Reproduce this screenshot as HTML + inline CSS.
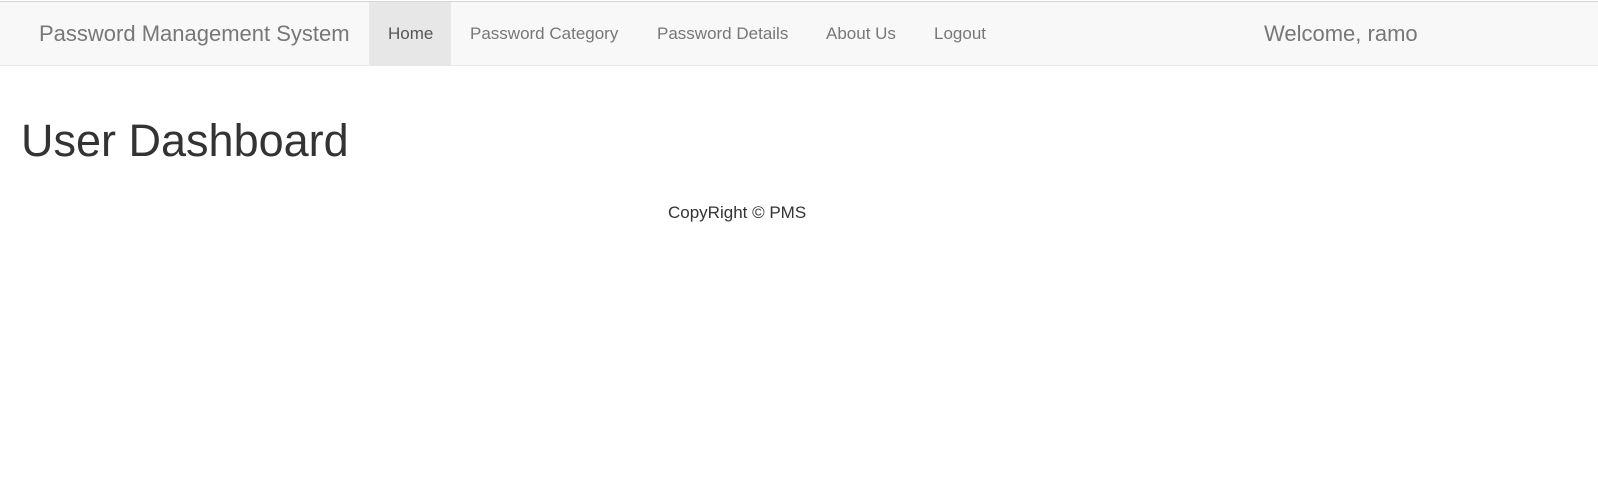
<!DOCTYPE html>
<html><head><style>
body{margin:0;background:#fff;font-family:"Liberation Sans",Arial,sans-serif;width:1598px;height:497px;overflow:hidden;position:relative}
.bar{position:absolute;left:0;top:0;width:1598px;height:1px;background:#fff;border-bottom:1px solid #d5d5d5}
.nav{position:absolute;left:0;top:2px;width:1598px;height:63px;background:#f8f8f8;border-bottom:1px solid #e7e7e7}
.t{position:absolute;white-space:nowrap;color:#777}
.act{position:absolute;left:369px;top:2px;width:82px;height:63px;background:#e7e7e7}
</style></head><body>
<div class="bar"></div>
<div class="nav"></div>
<div class="act"></div>
<div class="t" style="left:39px;top:21px;font-size:22px">Password Management System</div>
<div class="t" style="left:388px;top:24px;font-size:17px;color:#555">Home</div>
<div class="t" style="left:470px;top:24px;font-size:17px">Password Category</div>
<div class="t" style="left:657px;top:24px;font-size:17px">Password Details</div>
<div class="t" style="left:826px;top:24px;font-size:17px">About Us</div>
<div class="t" style="left:934px;top:24px;font-size:17px">Logout</div>
<div class="t" style="left:1264px;top:21px;font-size:22px">Welcome, ramo</div>
<div class="t" style="left:21px;top:115px;font-size:45px;color:#333">User Dashboard</div>
<div class="t" style="left:668px;top:203px;font-size:17px;color:#333">CopyRight © PMS</div>
</body></html>
